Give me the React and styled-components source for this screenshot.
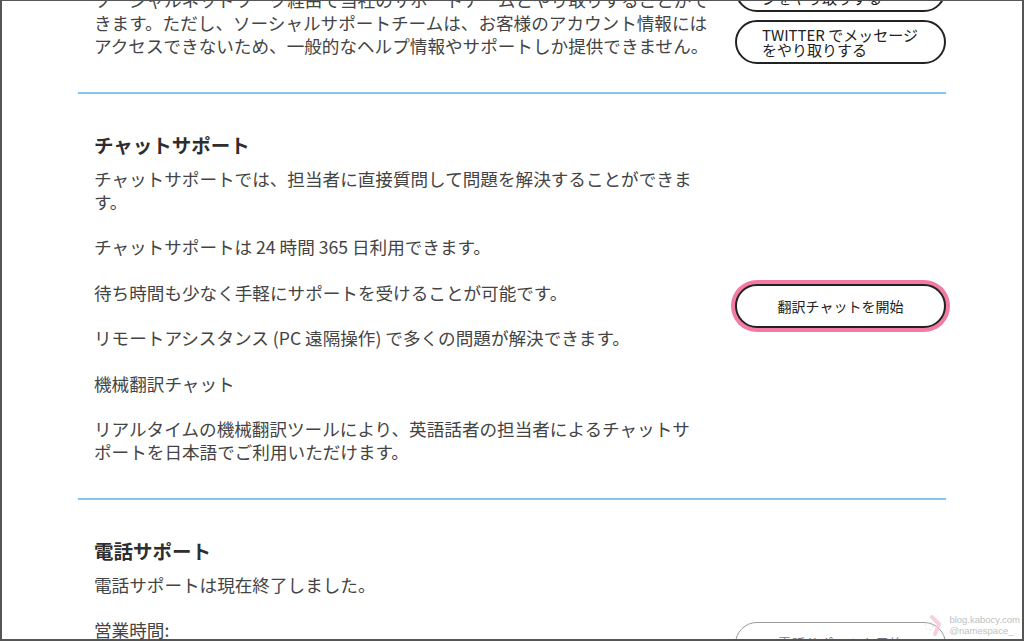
import React from "react";
import styled, { createGlobalStyle } from "styled-components";

const Global = createGlobalStyle`
  html, body {
    margin: 0;
    padding: 0;
    background: #fff;
  }
  body {
    font-family: "Noto Sans CJK JP", "Noto Sans", sans-serif;
    color: #444;
  }
`;

export default function App() {
  return (
    <>
      <Global />
      <Page lang="ja">
        <Content>
          <Section>
            <TextCol>
              <Heading>ソーシャルサポート</Heading>
              <Para>
                ソーシャルネットワーク経由で当社のサポートチームとやり取りすることができます。ただし、ソーシャルサポートチームは、お客様のアカウント情報にはアクセスできないため、一般的なヘルプ情報やサポートしか提供できません。
              </Para>
            </TextCol>
            <ButtonStack $shift={-2}>
              <PillButton $left>FACEBOOK でメッセージをやり取りする</PillButton>
              <PillButton $left>TWITTER でメッセージをやり取りする</PillButton>
            </ButtonStack>
          </Section>

          <Section>
            <TextCol>
              <Heading>チャットサポート</Heading>
              <Para>チャットサポートでは、担当者に直接質問して問題を解決することができます。</Para>
              <Para>チャットサポートは 24 時間 365 日利用できます。</Para>
              <Para>待ち時間も少なく手軽にサポートを受けることが可能です。</Para>
              <Para>リモートアシスタンス (PC 遠隔操作) で多くの問題が解決できます。</Para>
              <Para>機械翻訳チャット</Para>
              <Para>
                リアルタイムの機械翻訳ツールにより、英語話者の担当者によるチャットサポートを日本語でご利用いただけます。
              </Para>
            </TextCol>
            <ButtonStack $shift={-6}>
              <PillButton $focused $small>翻訳チャットを開始</PillButton>
            </ButtonStack>
          </Section>

          <Section $last>
            <TextCol>
              <Heading>電話サポート</Heading>
              <Para>電話サポートは現在終了しました。</Para>
              <Para>営業時間:</Para>
              <Para>月曜日～金曜日 9:00～18:00（祝日を除く）</Para>
              <Para>お問い合わせ番号はサインイン後に表示されます。</Para>
            </TextCol>
            <ButtonStack $shift={-6}>
              <PillButton $disabled $small>電話サポートを予約</PillButton>
            </ButtonStack>
          </Section>
        </Content>

        <Watermark>
          <svg width="22" height="22" viewBox="0 0 22 22">
            <path d="M9 3 L16 10 L12 20" fill="none" stroke="#f7c9d6" strokeWidth="4" strokeLinecap="round" />
            <circle cx="6" cy="12" r="4" fill="none" stroke="#cfe3f2" strokeWidth="1" strokeDasharray="2 2" />
          </svg>
          <WatermarkText>
            <span>blog.kabocy.com</span>
            <span>@namespace_</span>
          </WatermarkText>
        </Watermark>
      </Page>
    </>
  );
}

const Page = styled.div`
  position: relative;
  height: 641px;
  box-sizing: border-box;
  border: solid #555;
  border-width: 1px 2px 2px 2px;
  overflow: hidden;
  background: #fff;
`;

const Content = styled.main`
  width: 868px;
  margin: -86px auto 0;
`;

const Section = styled.section`
  display: flex;
  justify-content: space-between;
  align-items: center;
  padding: 39px 0 12px;
  border-bottom: ${(p) => (p.$last ? "none" : "2px solid #86c6ea")};
`;

const TextCol = styled.div`
  width: 620px;
  padding-left: 16px;
  line-break: strict;
`;

const Heading = styled.h3`
  margin: 0 0 10px;
  font-size: 19.5px;
  line-height: 24px;
  font-weight: 700;
  color: #2e2e2e;
`;

const Para = styled.p`
  margin: 0 0 22.5px;
  font-size: 17.6px;
  line-height: 23px;
  color: #444;
`;

const ButtonStack = styled.div`
  display: flex;
  flex-direction: column;
  gap: 8px;
  width: 211px;
  margin-top: ${(p) => (p.$shift > 0 ? p.$shift : 0)}px;
  margin-bottom: ${(p) => (p.$shift < 0 ? -p.$shift : 0)}px;
`;

const PillButton = styled.button`
  height: 44px;
  box-sizing: border-box;
  border-radius: 22px;
  border: ${(p) => (p.$disabled ? "1px solid #9a9a9a" : "2px solid #222")};
  background: #fff;
  color: ${(p) => (p.$disabled ? "#777" : "#222")};
  font-family: "Noto Sans CJK JP", "Noto Sans", sans-serif;
  font-size: ${(p) => (p.$small ? "14px" : "15px")};
  line-height: 15px;
  text-align: ${(p) => (p.$left ? "left" : "center")};
  padding: ${(p) => (p.$left ? "0 24px 0 25px" : "0 16px")};
  box-shadow: ${(p) => (p.$focused ? "0 0 0 4px #f47aa6" : "none")};
  cursor: pointer;
`;

const Watermark = styled.div`
  position: absolute;
  right: 2px;
  bottom: 3px;
  display: flex;
  align-items: center;
  gap: 4px;
  opacity: 0.85;
`;

const WatermarkText = styled.div`
  display: flex;
  flex-direction: column;
  font-family: "Liberation Sans", Arial, sans-serif;
  font-size: 9.5px;
  line-height: 11px;
  color: #b5b5b5;
`;
